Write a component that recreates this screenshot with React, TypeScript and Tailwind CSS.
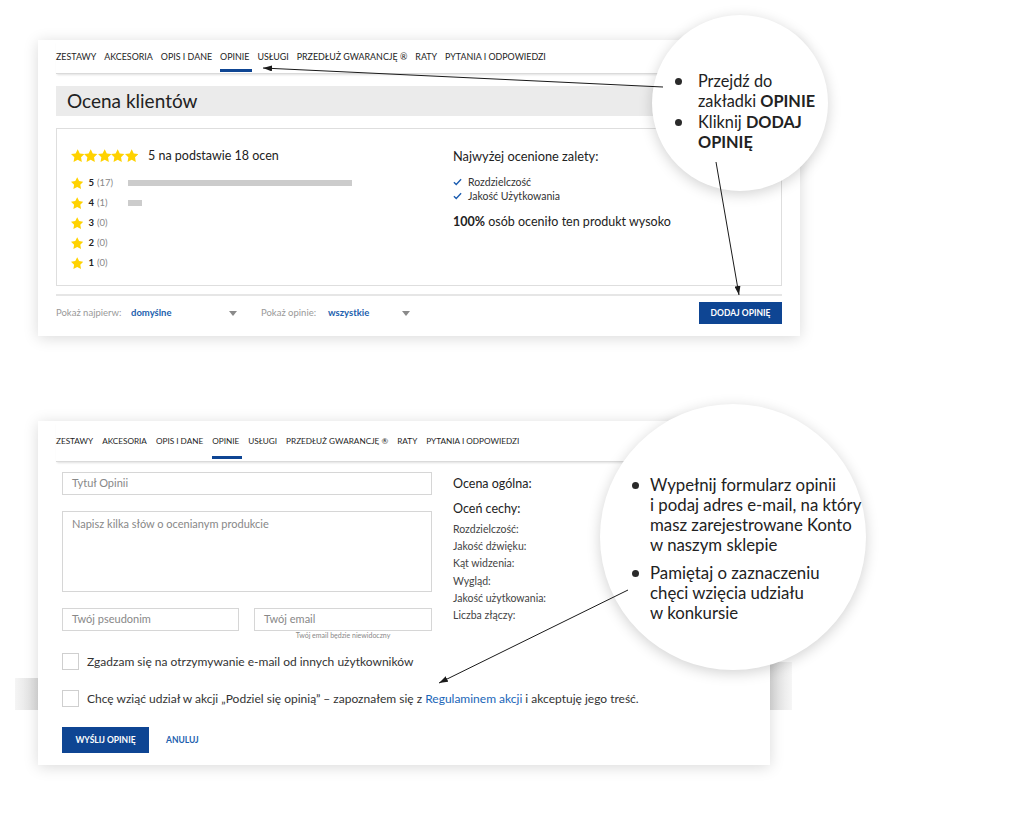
import React from "react";

const tabs = [
  "Zestawy",
  "Akcesoria",
  "Opis i dane",
  "Opinie",
  "Usługi",
  "Przedłuż gwarancję ®",
  "Raty",
  "Pytania i odpowiedzi",
];

const ratings = [
  { stars: 5, count: 17, width: 224 },
  { stars: 4, count: 1, width: 14 },
  { stars: 3, count: 0, width: 0 },
  { stars: 2, count: 0, width: 0 },
  { stars: 1, count: 0, width: 0 },
];

const features = [
  "Rozdzielczość:",
  "Jakość dźwięku:",
  "Kąt widzenia:",
  "Wygląd:",
  "Jakość użytkowania:",
  "Liczba złączy:",
];

function Star({ className }: { className: string }) {
  return (
    <svg viewBox="2 2 20 19.3" className={className} aria-hidden="true">
      <path
        d="M12 2l3.09 6.26L22 9.27l-5 4.87 1.18 6.88L12 17.77l-6.18 3.25L7 14.14 2 9.27l6.91-1.01L12 2z"
        fill="#ffd200"
      />
    </svg>
  );
}

function Check() {
  return (
    <svg viewBox="0 0 10 8" className="h-[8px] w-[9px]" aria-hidden="true">
      <path d="M1 4.2l2.6 2.6L9 1" fill="none" stroke="#1a5cb0" strokeWidth="1.5" />
    </svg>
  );
}

function Caret() {
  return (
    <svg viewBox="0 0 8 5" className="h-[5px] w-[8px]" aria-hidden="true">
      <polygon points="0,0 8,0 4,5" fill="#8a8a8a" />
    </svg>
  );
}

function Tabs({ small }: { small?: boolean }) {
  return (
    <nav
      className={
        small
          ? "flex h-[41px] gap-[9px] border-b border-[#dadada] text-[8.2px] uppercase leading-[11px] shadow-[0_2px_2px_-1px_rgba(0,0,0,0.12)]"
          : "flex h-[34px] gap-[8px] border-b border-[#dadada] text-[8.9px] uppercase leading-[12px] shadow-[0_2px_2px_-1px_rgba(0,0,0,0.12)]"
      }
    >
      {tabs.map((tab) => (
        <div key={tab} className={small ? "flex flex-col pt-[15px]" : "flex flex-col pt-[11px]"}>
          <span className="whitespace-nowrap text-[#1e1e1e]">{tab}</span>
          {tab === "Opinie" && (
            <span
              className={
                small
                  ? "mt-[9px] h-[3px] w-[calc(100%+3px)] bg-[#0e4593]"
                  : "mt-[6px] h-[3px] w-[calc(100%+3px)] bg-[#0e4593]"
              }
            />
          )}
        </div>
      ))}
    </nav>
  );
}

function Bullet() {
  return <span className="mt-[6.5px] h-[7px] w-[7px] shrink-0 rounded-full bg-[#2a2a2a]" />;
}

export default function App() {
  return (
    <div className="relative flex h-[834px] w-[1022px] flex-col overflow-hidden bg-white pt-[40px] font-['Lato',sans-serif] text-[#222]">
      {/* grey strips peeking out behind the form card */}
      <div className="absolute left-[15px] top-[678px] h-[32px] w-[23px] bg-linear-to-r from-[#f5f5f5] to-[#dcdcdc]" />
      <div className="absolute left-[770px] top-[662px] h-[48px] w-[22px] bg-linear-to-r from-[#dadada] to-[#f6f6f6]" />

      {/* reviews summary */}
      <section className="relative z-10 ml-[38px] w-[762px] bg-white px-[18px] pb-[12px] shadow-[0_2px_14px_rgba(0,0,0,0.15)]">
        <Tabs />
        <div className="mt-[12px] flex h-[30px] items-center bg-[#ebebeb] pl-[11px] text-[19px]">
          Ocena klientów
        </div>
        <div className="mt-[12px] flex h-[158px] border border-[#dedede]">
          <div className="w-[396px] pl-[14px] pt-[20px]">
            <div className="flex h-[14px] items-center">
              <div className="flex">
                {[0, 1, 2, 3, 4].map((i) => (
                  <Star key={i} className="h-[13.4px] w-[13.4px]" />
                ))}
              </div>
              <span className="ml-[10px] text-[12.5px]">5 na podstawie 18 ocen</span>
            </div>
            <div className="mt-[10px]">
              {ratings.map((r) => (
                <div key={r.stars} className="flex h-[20px] items-center">
                  <div className="flex w-[57px] items-center">
                    <Star className="h-[12.4px] w-[12.4px]" />
                    <span className="ml-[5px] text-[9.5px] font-bold">{r.stars}</span>
                    <span className="ml-[3px] text-[9.5px] text-[#888]">({r.count})</span>
                  </div>
                  {r.width > 0 && (
                    <div className="h-[6px] bg-[#cccccc]" style={{ width: r.width }} />
                  )}
                </div>
              ))}
            </div>
          </div>
          <div className="pt-[20px]">
            <p className="text-[12.8px] leading-[14px]">Najwyżej ocenione zalety:</p>
            <ul className="mt-[12px] text-[10.5px] leading-[14px] text-[#333]">
              <li className="flex items-center gap-[6px]">
                <Check />
                Rozdzielczość
              </li>
              <li className="flex items-center gap-[6px]">
                <Check />
                Jakość Użytkowania
              </li>
            </ul>
            <p className="mt-[12px] text-[12.5px] leading-[14px]">
              <b>100%</b> osób oceniło ten produkt wysoko
            </p>
          </div>
        </div>
        <div className="mt-[8px] h-[2px] bg-[#e6e6e6]" />
        <div className="mt-[6px] flex h-[22px] items-center text-[9.5px]">
          <span className="w-[75px] text-[#999]">Pokaż najpierw:</span>
          <span className="w-[98px] font-bold text-[#1d5fae]">domyślne</span>
          <Caret />
          <span className="ml-[24px] w-[67px] text-[#999]">Pokaż opinie:</span>
          <span className="w-[74px] font-bold text-[#1d5fae]">wszystkie</span>
          <Caret />
          <button className="ml-auto flex h-[22px] w-[83px] items-center justify-center bg-[#0e4593] text-[8.5px] font-bold text-white">
            DODAJ OPINIĘ
          </button>
        </div>
      </section>

      {/* review form */}
      <section className="relative z-10 ml-[38px] mt-[85px] w-[732px] bg-white px-[18px] pb-[12px] shadow-[0_2px_14px_rgba(0,0,0,0.15)]">
        <Tabs small />
        <div className="px-[6px]">
          <div className="flex">
            <div className="w-[370px]">
              <div className="mt-[10px] flex h-[23px] items-center border border-[#d6d6d6] pl-[9px] text-[11px] text-[#888]">
                Tytuł Opinii
              </div>
              <div className="mt-[16px] h-[81px] border border-[#d6d6d6] pl-[9px] pt-[4px] text-[11px] text-[#888]">
                Napisz kilka słów o ocenianym produkcie
              </div>
              <div className="mt-[16px] grid grid-cols-[177px_178px] gap-[15px]">
                <div className="flex h-[23px] items-center border border-[#d6d6d6] pl-[9px] text-[11px] text-[#888]">
                  Twój pseudonim
                </div>
                <div>
                  <div className="flex h-[23px] items-center border border-[#d6d6d6] pl-[9px] text-[11px] text-[#888]">
                    Twój email
                  </div>
                  <p className="text-center text-[7px] leading-[9px] text-[#888]">
                    Twój email będzie niewidoczny
                  </p>
                </div>
              </div>
            </div>
            <div className="ml-[21px]">
              <p className="mt-[15px] text-[12.5px] leading-[14px]">Ocena ogólna:</p>
              <p className="mt-[11px] text-[12.5px] leading-[14px]">Oceń cechy:</p>
              <ul className="mt-[5px] text-[10.5px] leading-[17.2px] text-[#444]">
                {features.map((f) => (
                  <li key={f}>{f}</li>
                ))}
              </ul>
            </div>
          </div>
          <label className="mt-[13px] flex h-[17px] items-center">
            <span className="h-[17px] w-[17px] border border-[#cfcfcf]" />
            <span className="ml-[8px] text-[12px] text-[#333]">
              Zgadzam się na otrzymywanie e-mail od innych użytkowników
            </span>
          </label>
          <label className="mt-[20px] flex h-[17px] items-center">
            <span className="h-[17px] w-[17px] border border-[#cfcfcf]" />
            <span className="ml-[8px] text-[12px] text-[#333]">
              Chcę wziąć udział w akcji „Podziel się opinią” – zapoznałem się z{" "}
              <a className="text-[#1a66b8]">Regulaminem akcji</a> i akceptuję jego treść.
            </span>
          </label>
          <div className="mt-[20px] flex items-center">
            <button className="flex h-[26px] w-[87px] items-center justify-center bg-[#0e4593] text-[8.5px] font-bold text-white">
              WYŚLIJ OPINIĘ
            </button>
            <span className="ml-[17px] text-[8.5px] font-bold text-[#1d5fae]">ANULUJ</span>
          </div>
        </div>
      </section>

      {/* callout bubbles */}
      <div className="absolute left-[652px] top-[15px] z-20 h-[176px] w-[176px] rounded-full bg-white pl-[23px] pt-[56px] text-[16.3px] leading-[20px] shadow-[0_3px_14px_rgba(0,0,0,0.18)]">
        <div className="flex">
          <Bullet />
          <p className="ml-[16px] whitespace-nowrap">
            Przejdź do
            <br />
            zakładki <b>OPINIE</b>
          </p>
        </div>
        <div className="mt-[1px] flex">
          <Bullet />
          <p className="ml-[16px] whitespace-nowrap">
            Kliknij <b>DODAJ</b>
            <br />
            <b>OPINIĘ</b>
          </p>
        </div>
      </div>

      <div className="absolute left-[600px] top-[404px] z-20 h-[266px] w-[266px] rounded-full bg-white pl-[32px] pt-[71px] text-[16.8px] leading-[20px] shadow-[0_3px_14px_rgba(0,0,0,0.18)]">
        <div className="flex">
          <Bullet />
          <p className="ml-[11px] whitespace-nowrap">
            Wypełnij formularz opinii
            <br />i podaj adres e-mail, na który
            <br />
            masz zarejestrowane Konto
            <br />w naszym sklepie
          </p>
        </div>
        <div className="mt-[8px] flex">
          <Bullet />
          <p className="ml-[11px] whitespace-nowrap">
            Pamiętaj o zaznaczeniu
            <br />
            chęci wzięcia udziału
            <br />w konkursie
          </p>
        </div>
      </div>

      {/* pointer arrows */}
      <svg className="pointer-events-none absolute left-0 top-0 z-30 h-[834px] w-[1022px]" viewBox="0 0 1022 834">
        <defs>
          <marker id="ah" markerWidth="9" markerHeight="6" refX="9" refY="3" orient="auto" markerUnits="userSpaceOnUse">
            <path d="M0,0 L9,3 L0,6z" fill="#1a1a1a" />
          </marker>
        </defs>
        <g stroke="#1a1a1a" strokeWidth="1" fill="none">
          <path d="M663 87 L263 68" markerEnd="url(#ah)" />
          <path d="M716 162 L739 295" markerEnd="url(#ah)" />
          <path d="M628 590 L439 683" markerEnd="url(#ah)" />
        </g>
      </svg>
    </div>
  );
}
